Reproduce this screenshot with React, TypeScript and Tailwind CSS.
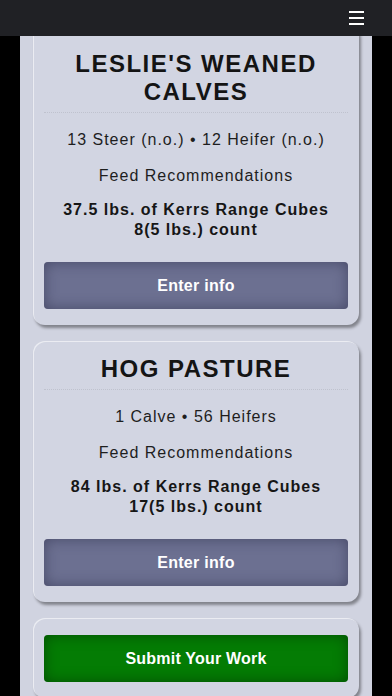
import React from 'react';

interface Pen {
  name: string[];
  counts: string;
  lbs: string;
  count: string;
}

const pens: Pen[] = [
  { name: ["LESLIE'S WEANED", 'CALVES'], counts: '13 Steer (n.o.) • 12 Heifer (n.o.)', lbs: '37.5 lbs. of Kerrs Range Cubes', count: '8(5 lbs.) count' },
  { name: ['HOG PASTURE'], counts: '1 Calve • 56 Heifers', lbs: '84 lbs. of Kerrs Range Cubes', count: '17(5 lbs.) count' },
];

const font = { fontFamily: '"Liberation Sans", Arial, Helvetica, sans-serif' };

const cardCls =
  'bg-[#d2d5e2] rounded-[12px] px-[11px] shadow-[inset_1px_1px_0_rgba(255,255,255,0.55),2px_3px_3px_rgba(0,0,0,0.38)]';

const PenCard: React.FC<{ pen: Pen; first?: boolean }> = ({ pen, first }) => (
  <div className={`${cardCls} ${first ? 'pt-[26px]' : 'pt-[14px]'} pb-[16px] text-center`}>
    {/* Title */}
    <h2 className="text-[24px] leading-[28px] font-bold tracking-[1.5px] text-[#141414]">
      {pen.name.map((l) => (
        <div key={l}>{l}</div>
      ))}
    </h2>
    <div className="mt-[6px] border-t border-dotted border-[#bfc2ce]"></div>

    <p className="mt-[15px] text-[16px] leading-[24px] tracking-[1px] text-[#1e1e1e]">{pen.counts}</p>
    <p className="mt-[12px] text-[16px] leading-[24px] tracking-[1px] text-[#1e1e1e]">Feed Recommendations</p>
    <p className="mt-[12px] text-[16px] leading-[20px] font-bold tracking-[1px] text-[#161616]">
      {pen.lbs}
      <br />
      {pen.count}
    </p>

    <button className="mt-[22px] w-full h-[47px] rounded-[4px] bg-[#6c7091] text-white text-[16px] font-bold tracking-[0.3px] shadow-[inset_0_0_14px_rgba(40,42,70,0.55)]">
      Enter info
    </button>
  </div>
);

export default function App() {
  return (
    <div className="min-h-[696px] bg-black" style={font}>
      {/* Top bar */}
      <div className="fixed top-0 left-0 right-0 h-9 bg-[#202125] z-10 flex items-center justify-end pr-[28px]">
        <div className="flex flex-col gap-[4px] w-[15px]">
          <span className="block h-[2px] bg-white"></span>
          <span className="block h-[2px] bg-white"></span>
          <span className="block h-[2px] bg-white"></span>
        </div>
      </div>

      <div className="mx-5 bg-[#d0d3e0] px-[13px] pt-[24px] pb-[16px] flex flex-col gap-4 min-h-[696px]">
        {pens.map((p, i) => (
          <PenCard key={p.lbs} pen={p} first={i === 0} />
        ))}

        <div className={`${cardCls} pt-[17px] pb-[16px]`}>
          <button className="w-full h-[47px] rounded-[4px] bg-[#047c04] text-white text-[16px] font-bold tracking-[0.2px] shadow-[inset_0_0_14px_rgba(0,50,0,0.6)]">
            Submit Your Work
          </button>
        </div>
      </div>
    </div>
  );
}
